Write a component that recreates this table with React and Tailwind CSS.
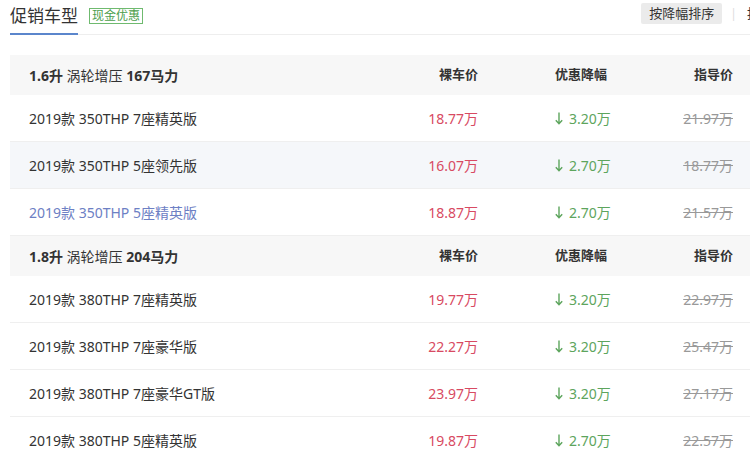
import React from "react";

const groups = [
  {
    title: ["1.6升", "涡轮增压", "167马力"],
    rows: [
      { name: "2019款 350THP 7座精英版", price: "18.77万", off: "3.20万", guide: "21.97万" },
      { name: "2019款 350THP 5座领先版", price: "16.07万", off: "2.70万", guide: "18.77万", hover: true },
      { name: "2019款 350THP 5座精英版", price: "18.87万", off: "2.70万", guide: "21.57万", link: true },
    ],
  },
  {
    title: ["1.8升", "涡轮增压", "204马力"],
    rows: [
      { name: "2019款 380THP 7座精英版", price: "19.77万", off: "3.20万", guide: "22.97万" },
      { name: "2019款 380THP 7座豪华版", price: "22.27万", off: "3.20万", guide: "25.47万" },
      { name: "2019款 380THP 7座豪华GT版", price: "23.97万", off: "3.20万", guide: "27.17万" },
      { name: "2019款 380THP 5座精英版", price: "19.87万", off: "2.70万", guide: "22.57万" },
    ],
  },
];

const font = { fontFamily: '"Noto Sans", "Noto Sans CJK SC", sans-serif' };

const DownArrow = () => (
  <svg width="8" height="13" viewBox="0 0 8 13" className="inline-block mr-[6px] -mt-[2px]">
    <path d="M4 0.5V11.5M0.8 8.2L4 11.8L7.2 8.2" fill="none" stroke="currentColor" strokeWidth="1.4" />
  </svg>
);

const GroupHeader = ({ title }) => (
  <div className="flex items-center h-[40px] bg-[#f7f7f7] text-[14px] text-[#333]">
    <div className="w-[360px] pl-[19px]">
      <span className="font-bold">{title[0]}</span> <span>{title[1]}</span>{" "}
      <span className="font-bold">{title[2]}</span>
    </div>
    <div className="w-[108px] text-right font-bold text-[13px]">裸车价</div>
    <div className="ml-[77px] w-[100px] font-bold text-[13px]">优惠降幅</div>
    <div className="w-[78px] text-right font-bold text-[13px]">指导价</div>
  </div>
);

const Row = ({ row }) => (
  <div
    className={`flex items-center h-[47px] border-b border-[#efefef] text-[14px] ${
      row.hover ? "bg-[#f5f7fa]" : "bg-white"
    }`}
  >
    <div className={`w-[360px] pl-[19px] ${row.link ? "text-[#6d80c4]" : "text-[#333]"}`}>
      {row.name}
    </div>
    <div className="w-[108px] text-right text-[#d84a62]">{row.price}</div>
    <div className="ml-[77px] w-[100px] text-[#5da55d]">
      <DownArrow />
      {row.off}
    </div>
    <div className="w-[78px] text-right text-[#999] line-through">{row.guide}</div>
  </div>
);

export default function App() {
  return (
    <div className="w-[750px] h-[463px] overflow-hidden bg-white" style={font}>
      <div className="flex items-start justify-between border-b border-[#eeeeee] ml-[10px]">
        <div className="flex items-start">
          <div className="pt-[3px] h-[35px] text-[17px] leading-[25px] text-[#333] border-b-2 border-[#5b86cc] mb-[-1px]">
            促销车型
          </div>
          <span className="ml-[11px] mt-[8px] px-[2px] border border-[#6fba6f] text-[#4c9e4c] text-[12px] leading-[14px]">
            现金优惠
          </span>
        </div>
        <div className="flex items-center mt-[3px] mr-[-10px]">
          <span className="px-[8px] h-[21px] leading-[21px] bg-[#ebebeb] text-[13px] text-[#333] rounded-[2px]">
            按降幅排序
          </span>
          <span className="ml-[8px] text-[#ddd] text-[12px]">|</span>
          <span className="ml-[10px] text-[13px] text-[#333]">按</span>
        </div>
      </div>
      <div className="ml-[10px] mt-[20px]">
        {groups.map((g, i) => (
          <div key={i}>
            <GroupHeader title={g.title} />
            {g.rows.map((r, j) => (
              <Row key={j} row={r} />
            ))}
          </div>
        ))}
      </div>
    </div>
  );
}
